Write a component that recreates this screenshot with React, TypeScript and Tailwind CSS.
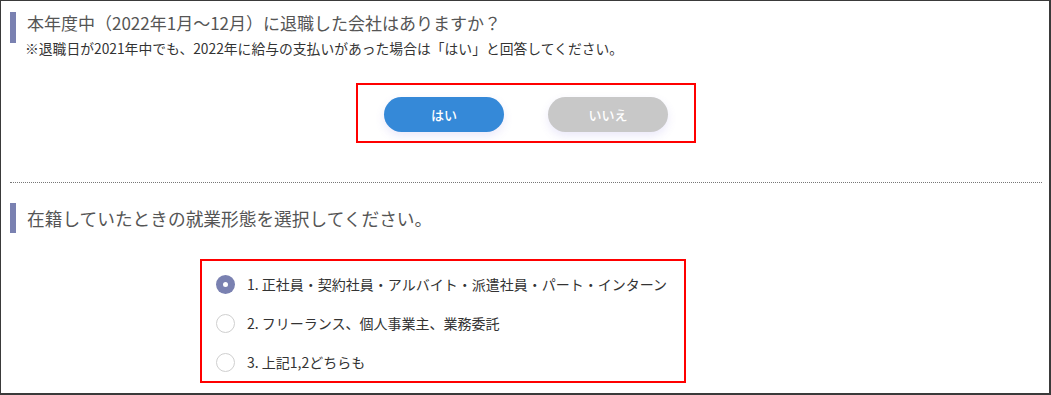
import { useState } from 'react'

const options = [
  '1. 正社員・契約社員・アルバイト・派遣社員・パート・インターン',
  '2. フリーランス、個人事業主、業務委託',
  '3. 上記1,2どちらも',
]

function Radio({ checked }: { checked: boolean }) {
  if (checked) {
    return (
      <span className="flex h-[19px] w-[19px] shrink-0 items-center justify-center rounded-full bg-[#7a81b1]">
        <span className="h-[5px] w-[5px] rounded-full bg-white" />
      </span>
    )
  }
  return <span className="h-[19px] w-[19px] shrink-0 rounded-full border border-[#cfcfcf] bg-white" />
}

export default function App() {
  const [retired, setRetired] = useState(true)
  const [type, setType] = useState(0)

  return (
    <div className="h-[395px] w-[1051px] overflow-hidden border-t border-l border-r-2 border-b-2 border-[#3a3a3a] bg-white pr-[7px] pl-[9px] font-['Noto_Sans_CJK_JP',sans-serif]">
      <div className="pt-[11px]">
        <div className="flex gap-[11px]">
          <span className="h-[31px] w-[6px] shrink-0 bg-[#7a81b1]" />
          <h2 className="text-[17px] leading-[22px] text-[#555]">
            本年度中（2022年1月〜12月）に退職した会社はありますか？
          </h2>
        </div>
        <p className="-mt-[3px] ml-[15px] text-[13.8px] leading-[16px] text-[#333]">
          ※退職日が2021年中でも、2022年に給与の支払いがあった場合は「はい」と回答してください。
        </p>
      </div>

      <div className="mx-auto mt-[27px] flex h-[60px] w-[340px] justify-center gap-[44px] border-2 border-[#ff0000] pt-[12px]">
        <button
          onClick={() => setRetired(true)}
          className={`h-[35px] w-[120px] rounded-full text-[13px] font-medium text-white shadow-[0_4px_10px_rgba(110,100,220,0.14)] ${retired ? 'bg-[#3589d8]' : 'bg-[#c8c8c8]'}`}
        >
          はい
        </button>
        <button
          onClick={() => setRetired(false)}
          className={`h-[35px] w-[120px] rounded-full text-[13px] font-medium text-white shadow-[0_4px_10px_rgba(110,100,220,0.14)] ${!retired ? 'bg-[#3589d8]' : 'bg-[#c8c8c8]'}`}
        >
          いいえ
        </button>
      </div>

      <div className="mt-[39px] border-t border-dotted border-[#777]" />

      <div className="mt-[20px] flex items-center gap-[11px]">
        <span className="h-[30px] w-[6px] shrink-0 bg-[#7a81b1]" />
        <h2 className="text-[17.7px] leading-[22px] text-[#555]">在籍していたときの就業形態を選択してください。</h2>
      </div>

      <div className="mt-[26px] ml-[190px] h-[124px] w-[486px] border-2 border-[#ff0000] pt-[4px] pl-[14px]">
        {options.map((label, i) => (
          <label
            key={label}
            onClick={() => setType(i)}
            className="flex h-[39px] cursor-pointer items-center gap-[12px] text-[14px] text-[#333]"
          >
            <Radio checked={type === i} />
            <span>{label}</span>
          </label>
        ))}
      </div>
    </div>
  )
}
